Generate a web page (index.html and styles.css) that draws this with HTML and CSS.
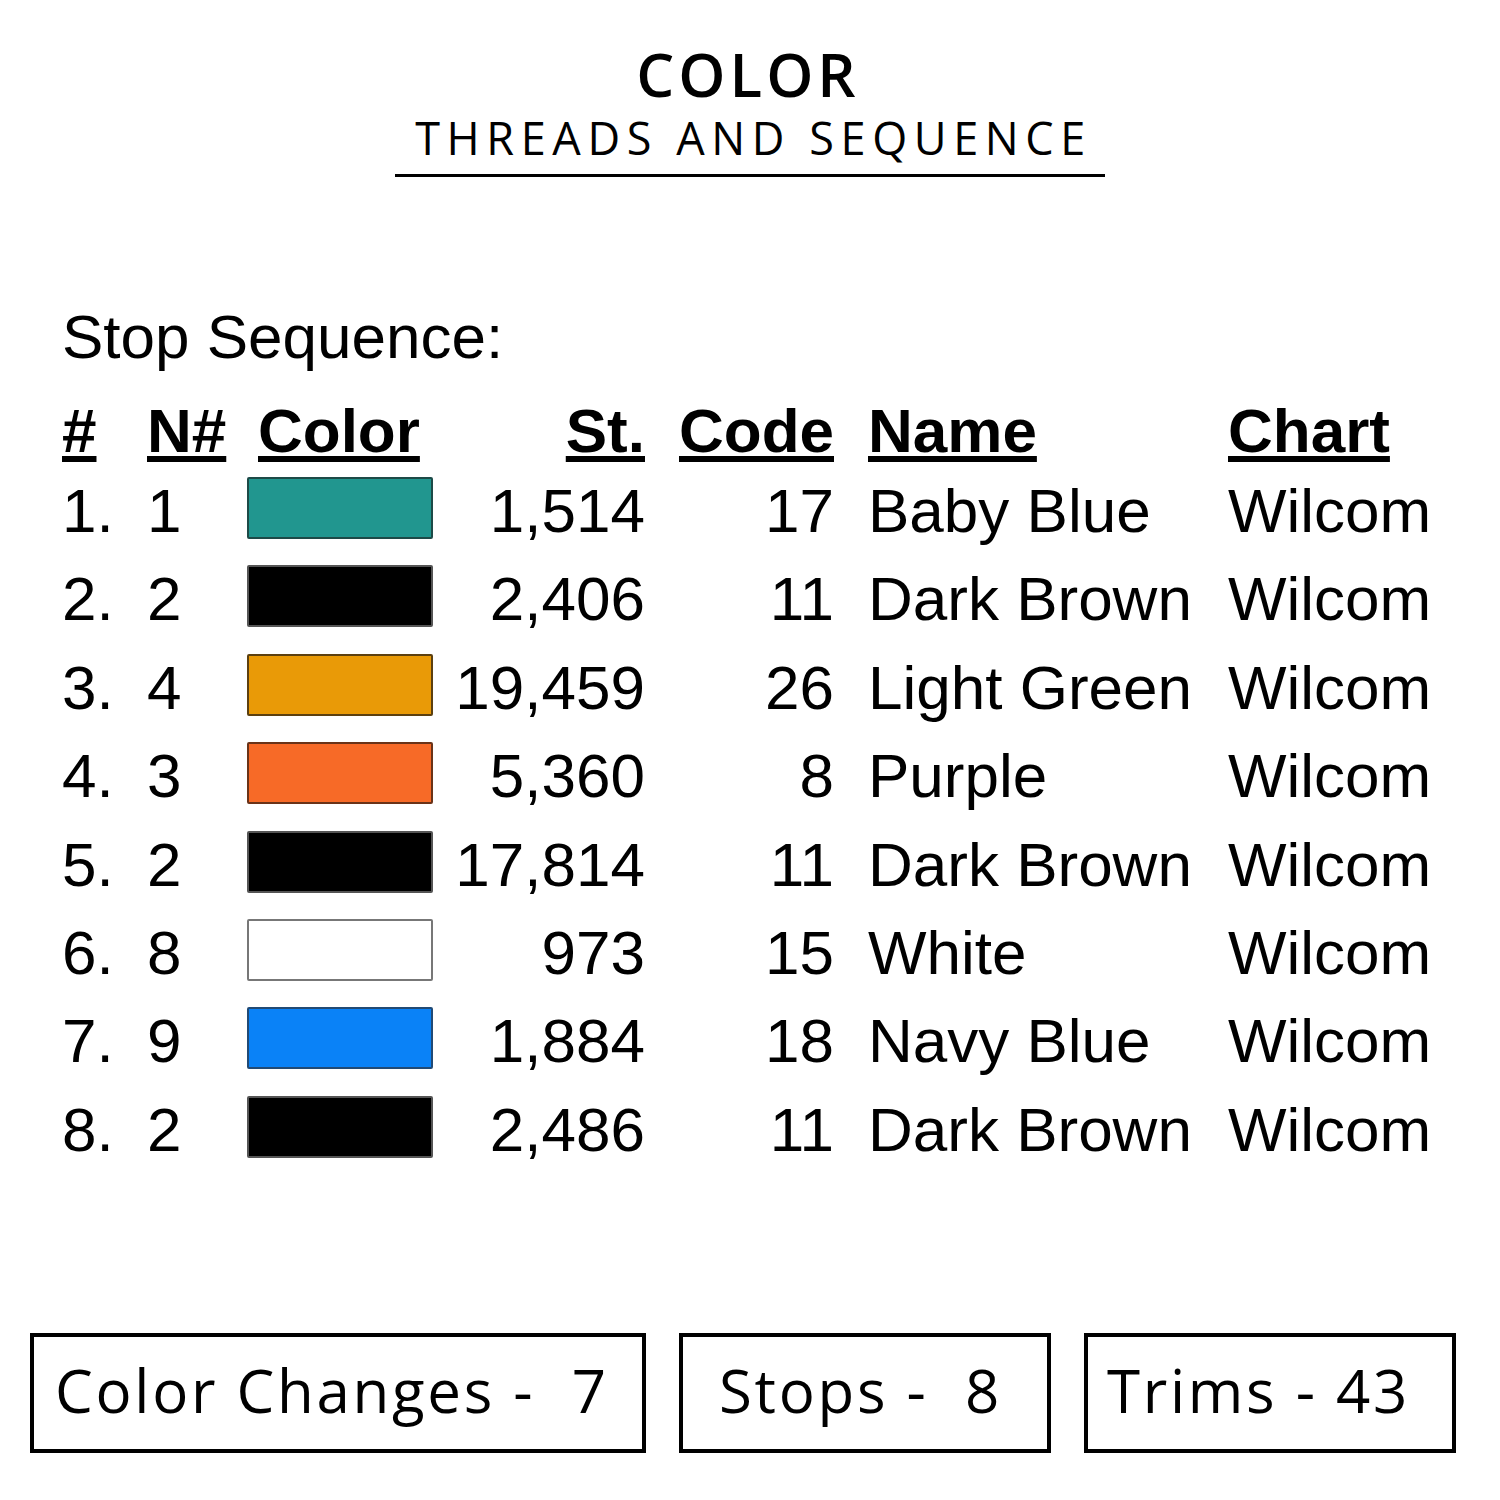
FILE: index.html
```html
<!DOCTYPE html>
<html>
<head>
<meta charset="utf-8">
<link rel="stylesheet" href="styles.css">
</head>
<body>
<div class="page">
  <header class="title">
    <div class="title-main">COLOR</div>
    <div class="title-sub">THREADS AND SEQUENCE</div>
  </header>

  <section class="seq">
    <div class="seq-label">Stop Sequence:</div>
    <div class="grid">
      <div class="h c-num"><span>#</span></div>
      <div class="h c-n"><span>N#</span></div>
      <div class="h c-color"><span>Color</span></div>
      <div class="h c-st"><span>St.</span></div>
      <div class="h c-code"><span>Code</span></div>
      <div class="h c-name"><span>Name</span></div>
      <div class="h c-chart"><span>Chart</span></div>

      <div class="d c-num">1.</div><div class="d c-n">1</div><div class="d c-color"><i class="sw teal"></i></div><div class="d c-st">1,514</div><div class="d c-code">17</div><div class="d c-name">Baby Blue</div><div class="d c-chart">Wilcom</div>
      <div class="d c-num">2.</div><div class="d c-n">2</div><div class="d c-color"><i class="sw black"></i></div><div class="d c-st">2,406</div><div class="d c-code">11</div><div class="d c-name">Dark Brown</div><div class="d c-chart">Wilcom</div>
      <div class="d c-num">3.</div><div class="d c-n">4</div><div class="d c-color"><i class="sw gold"></i></div><div class="d c-st">19,459</div><div class="d c-code">26</div><div class="d c-name">Light Green</div><div class="d c-chart">Wilcom</div>
      <div class="d c-num">4.</div><div class="d c-n">3</div><div class="d c-color"><i class="sw orange"></i></div><div class="d c-st">5,360</div><div class="d c-code">8</div><div class="d c-name">Purple</div><div class="d c-chart">Wilcom</div>
      <div class="d c-num">5.</div><div class="d c-n">2</div><div class="d c-color"><i class="sw black"></i></div><div class="d c-st">17,814</div><div class="d c-code">11</div><div class="d c-name">Dark Brown</div><div class="d c-chart">Wilcom</div>
      <div class="d c-num">6.</div><div class="d c-n">8</div><div class="d c-color"><i class="sw white"></i></div><div class="d c-st">973</div><div class="d c-code">15</div><div class="d c-name">White</div><div class="d c-chart">Wilcom</div>
      <div class="d c-num">7.</div><div class="d c-n">9</div><div class="d c-color"><i class="sw blue"></i></div><div class="d c-st">1,884</div><div class="d c-code">18</div><div class="d c-name">Navy Blue</div><div class="d c-chart">Wilcom</div>
      <div class="d c-num">8.</div><div class="d c-n">2</div><div class="d c-color"><i class="sw black"></i></div><div class="d c-st">2,486</div><div class="d c-code">11</div><div class="d c-name">Dark Brown</div><div class="d c-chart">Wilcom</div>
    </div>
  </section>

  <footer class="stats">
    <div class="box box-cc">Color Changes -&nbsp; 7</div>
    <div class="box box-stops">Stops -&nbsp; 8</div>
    <div class="box box-trims">Trims - 43</div>
  </footer>
</div>
</body>
</html>
```

FILE: styles.css
```css
html, body {
  margin: 0;
  padding: 0;
  background: #ffffff;
  color: #000000;
}

.page {
  width: 1500px;
  height: 1500px;
  overflow: hidden;
}

.title {
  padding-top: 42px;
  text-align: center;
  font-family: "Open Sans", "Noto Sans", sans-serif;
}

.title-main {
  font-size: 60px;
  font-weight: 600;
  line-height: 64px;
  letter-spacing: 4px;
  padding-left: 4px;
  margin-left: -8px;
}

.title-sub {
  display: inline-block;
  margin-top: 7px;
  font-size: 45px;
  font-weight: 400;
  line-height: 50px;
  letter-spacing: 6.6px;
  padding: 0 13px 11px 20px;
  border-bottom: 3px solid #000;
}

.seq {
  margin-top: 124px;
  padding-left: 62px;
  font-family: "Liberation Sans", Arial, sans-serif;
  font-size: 62px;
}

.seq-label {
  line-height: 72px;
}

.grid {
  margin-top: 22px;
  display: grid;
  grid-template-columns: 85px 100px 185px 213px 189px 394px 1fr;
  grid-template-rows: 72px repeat(8, 88.4px);
}

.h {
  font-weight: bold;
  line-height: 72px;
  white-space: nowrap;
}

.h span {
  text-decoration: underline;
  text-decoration-thickness: 6px;
  text-underline-offset: 4px;
}

.d {
  line-height: 88px;
  white-space: nowrap;
}

.c-st, .c-code {
  text-align: right;
}

.h.c-color {
  padding-left: 11px;
}

.c-name {
  padding-left: 34px;
}

.sw {
  display: block;
  box-sizing: border-box;
  width: 186px;
  height: 62px;
  margin-top: 10px;
  border: 2px solid #333;
  border-radius: 2px;
}

.teal   { background: #21968f; border-color: #1d4a47; }
.black  { background: #000000; border-color: #555555; }
.gold   { background: #e99a07; border-color: #5c4010; }
.orange { background: #f76a27; border-color: #6a3318; }
.white  { background: #ffffff; border-color: #777777; }
.blue   { background: #0a82f7; border-color: #214a75; }

.stats {
  margin-top: 159px;
  padding-left: 30px;
  display: flex;
  gap: 33px;
  font-family: "Open Sans", "Noto Sans", sans-serif;
  font-weight: 400;
  font-size: 60px;
  letter-spacing: 2.7px;
}

.box {
  box-sizing: border-box;
  height: 120px;
  border: 4px solid #000;
  display: flex;
  align-items: center;
  padding-bottom: 6px;
  white-space: nowrap;
}

.box-cc    { width: 616px; padding-left: 21px; }
.box-stops { width: 372px; padding-left: 36px; }
.box-trims { width: 372px; padding-left: 19px; }
```
